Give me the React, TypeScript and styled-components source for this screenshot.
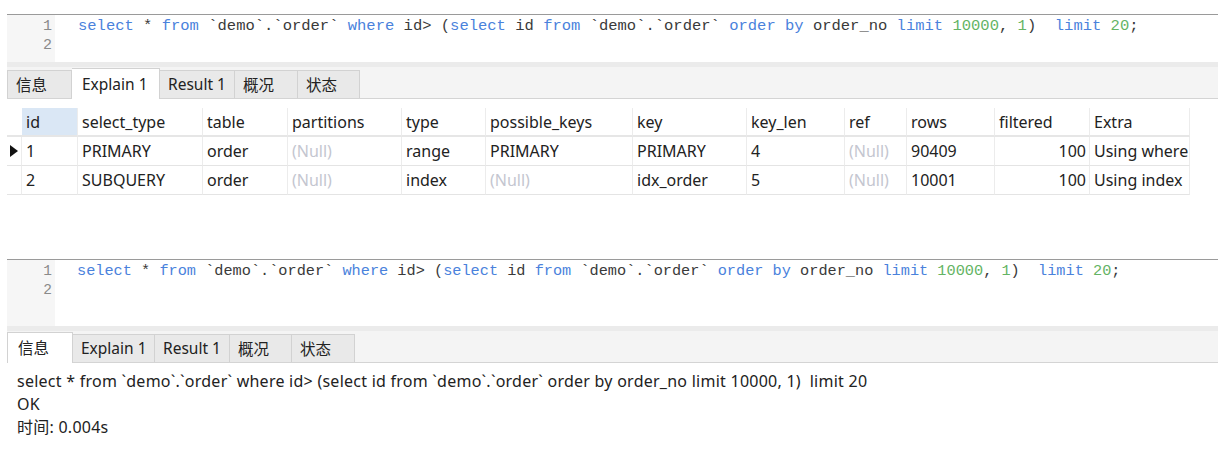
import React from "react";
import styled, { createGlobalStyle } from "styled-components";

const Global = createGlobalStyle`
  html, body { margin: 0; padding: 0; background: #ffffff; }
  body { font-family: "Noto Sans", "Noto Sans CJK SC", sans-serif; color: #222; }
`;

const Page = styled.div`
  width: 1218px;
  height: 456px;
  display: flex;
  flex-direction: column;
  padding-left: 7px;
  box-sizing: border-box;
  overflow: hidden;
`;

const Panel = styled.section<{ $top: number }>`
  margin-top: ${(p) => p.$top}px;
  display: flex;
  flex-direction: column;
`;

const Editor = styled.div<{ $h: number }>`
  display: flex;
  height: ${(p) => p.$h}px;
  border-top: 1px solid #9a9a9a;
`;

const Gutter = styled.div<{ $fs: number }>`
  width: 48px;
  background: #f6f6f6;
  color: #8a8a8a;
  font-family: "Liberation Mono", monospace;
  font-size: ${(p) => p.$fs}px;
  line-height: 19px;
  padding-top: 2px;
  text-align: right;
  padding-right: 3px;
  box-sizing: border-box;
`;

const Code = styled.pre<{ $fs: number; $pl: number }>`
  margin: 0;
  padding: 2px 0 0 ${(p) => p.$pl}px;
  font-family: "Liberation Mono", monospace;
  font-size: ${(p) => p.$fs}px;
  line-height: 19px;
  color: #3a3a3a;
  white-space: pre;
`;

const Kw = styled.span`
  color: #4a82dc;
`;
const Num = styled.span`
  color: #64b464;
`;

const Separator = styled.div`
  height: 5px;
  background: #ebebeb;
`;

const TabBar = styled.div`
  display: flex;
  align-items: flex-end;
  height: 31px;
  background: #f4f4f4;
  border-bottom: 1px solid #d4d4d4;
`;

const Tab = styled.div<{ $w: number; $active?: boolean }>`
  width: ${(p) => p.$w}px;
  height: ${(p) => (p.$active ? 31 : 28)}px;
  box-sizing: border-box;
  display: flex;
  align-items: center;
  padding-left: ${(p) => (p.$active ? 10 : 8)}px;
  padding-bottom: 1px;
  font-size: 15.5px;
  color: #222;
  background: ${(p) => (p.$active ? "#ffffff" : "#e9e9e9")};
  border: 1px solid #d2d2d2;
  border-bottom: none;
  margin-bottom: ${(p) => (p.$active ? -1 : 0)}px;
  border-left-width: 0;
  &:first-child { border-left-width: 1px; }
`;

const colWidths = [15, 56, 125, 85, 114, 84, 147, 114, 98, 62, 88, 95, 100];

const Grid = styled.div`
  display: grid;
  grid-template-columns: ${colWidths.map((w) => `${w}px`).join(" ")};
  margin-top: 9px;
  font-size: 16px;
  color: #222;
`;

const HeadCell = styled.div<{ $sel?: boolean; $blank?: boolean }>`
  height: 29px;
  box-sizing: border-box;
  display: flex;
  align-items: center;
  padding-left: 4px;
  background: ${(p) => (p.$sel ? "#dae7f5" : "transparent")};
  border-bottom: 2px solid #e6e6e6;
  border-right: ${(p) => (p.$blank ? "none" : "1px solid #ececec")};
  white-space: nowrap;
`;

const Cell = styled.div<{ $null?: boolean; $right?: boolean }>`
  height: 29px;
  box-sizing: border-box;
  display: flex;
  align-items: center;
  justify-content: ${(p) => (p.$right ? "flex-end" : "flex-start")};
  padding: 0 ${(p) => (p.$right ? 3 : 0)}px 0 4px;
  color: ${(p) => (p.$null ? "#c4c6d0" : "#222")};
  border-bottom: 1px solid #e4e4e4;
  border-right: 1px solid #ececec;
  white-space: nowrap;
  overflow: hidden;
`;

const MarkerCell = styled(Cell)`
  padding-left: 3px;
`;

const Marker = styled.svg`
  display: block;
`;

const Message = styled.div`
  padding: 7px 0 0 10px;
  font-size: 16px;
  letter-spacing: 0.25px;
  line-height: 23px;
  color: #222;
  white-space: pre;
`;

const SqlLine = ({ fs, pl }: { fs: number; pl: number }) => (
  <Code $fs={fs} $pl={pl}>
    <Kw>select</Kw> * <Kw>from</Kw> `demo`.`order` <Kw>where</Kw> id&gt; (<Kw>select</Kw> id <Kw>from</Kw> `demo`.`order` <Kw>order by</Kw> order_no <Kw>limit</Kw> <Num>10000</Num>, <Num>1</Num>)  <Kw>limit</Kw> <Num>20</Num>;
  </Code>
);

const Tabs = ({ active, widths }: { active: number; widths: number[] }) => {
  const names = ["信息", "Explain 1", "Result 1", "概况", "状态"];
  return (
    <TabBar>
      {names.map((n, i) => (
        <Tab key={n} $w={widths[i]} $active={i === active}>
          {n}
        </Tab>
      ))}
    </TabBar>
  );
};

const cols = [
  "id",
  "select_type",
  "table",
  "partitions",
  "type",
  "possible_keys",
  "key",
  "key_len",
  "ref",
  "rows",
  "filtered",
  "Extra",
];

type Val = string | null;
const rows: Val[][] = [
  ["1", "PRIMARY", "order", null, "range", "PRIMARY", "PRIMARY", "4", null, "90409", "100", "Using where"],
  ["2", "SUBQUERY", "order", null, "index", null, "idx_order", "5", null, "10001", "100", "Using index"],
];

export default function App() {
  return (
    <Page>
      <Global />
      <Panel $top={14}>
        <Editor $h={47}>
          <Gutter $fs={15}>
            <div>1</div>
            <div>2</div>
          </Gutter>
          <SqlLine fs={15.5} pl={23} />
        </Editor>
        <Separator />
        <Tabs active={1} widths={[65, 88, 75, 63, 62]} />
        <Grid>
          <HeadCell $blank />
          {cols.map((n, i) => (
            <HeadCell key={n} $sel={i === 0}>
              {n}
            </HeadCell>
          ))}
          {rows.map((r, ri) => (
            <React.Fragment key={ri}>
              <MarkerCell>
                {ri === 0 && (
                  <Marker width="8" height="12" viewBox="0 0 8 12">
                    <path d="M0 0 L8 6 L0 12 Z" fill="#111" />
                  </Marker>
                )}
              </MarkerCell>
              {r.map((c, ci) => (
                <Cell key={ci} $null={c === null} $right={ci === 10}>
                  {c === null ? "(Null)" : c}
                </Cell>
              ))}
            </React.Fragment>
          ))}
        </Grid>
      </Panel>
      <Panel $top={64}>
        <Editor $h={66}>
          <Gutter $fs={14.5}>
            <div>1</div>
            <div>2</div>
          </Gutter>
          <SqlLine fs={15.25} pl={22} />
        </Editor>
        <Separator />
        <Tabs active={0} widths={[66, 82, 75, 62, 63]} />
        <Message>
          {"select * from `demo`.`order` where id> (select id from `demo`.`order` order by order_no limit 10000, 1)  limit 20\nOK\n时间: 0.004s"}
        </Message>
      </Panel>
    </Page>
  );
}
